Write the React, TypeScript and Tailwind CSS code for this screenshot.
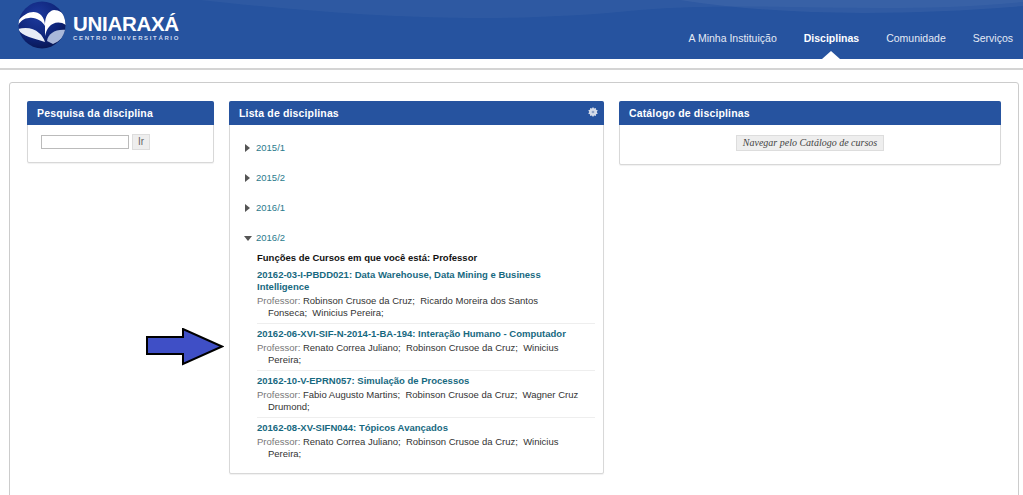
import React from "react";

const navItems = [
  { label: "A Minha Instituição", active: false },
  { label: "Disciplinas", active: true },
  { label: "Comunidade", active: false },
  { label: "Serviços", active: false },
];

const courses = [
  {
    title: "20162-03-I-PBDD021: Data Warehouse, Data Mining e Business Intelligence",
    first: "Robinson Crusoe da Cruz;  Ricardo Moreira dos Santos",
    rest: "Fonseca;  Winicius Pereira;",
  },
  {
    title: "20162-06-XVI-SIF-N-2014-1-BA-194: Interação Humano - Computador",
    first: "Renato Correa Juliano;  Robinson Crusoe da Cruz;  Winicius",
    rest: "Pereira;",
  },
  {
    title: "20162-10-V-EPRN057: Simulação de Processos",
    first: "Fabio Augusto Martins;  Robinson Crusoe da Cruz;  Wagner Cruz",
    rest: "Drumond;",
  },
  {
    title: "20162-08-XV-SIFN044: Tópicos Avançados",
    first: "Renato Correa Juliano;  Robinson Crusoe da Cruz;  Winicius",
    rest: "Pereira;",
  },
];

function Globe() {
  return (
    <svg width="48" height="48" viewBox="0 0 48 48" className="shrink-0">
      <defs>
        <radialGradient id="ball" cx="40%" cy="30%" r="75%">
          <stop offset="0%" stopColor="#1d3a9e" />
          <stop offset="65%" stopColor="#0e2478" />
          <stop offset="100%" stopColor="#081650" />
        </radialGradient>
        <clipPath id="ballClip">
          <circle cx="24" cy="24" r="23.500" />
        </clipPath>
      </defs>
      <circle cx="24" cy="24" r="23.500" fill="url(#ball)" />
      <g clipPath="url(#ballClip)">
        <path d="M0 20C7 11 17 8 23 14c3 3 4 7 4 11-3-5-9-9-16-8-5 0-8 3-11 7z" fill="#ffffff" />
        <path d="M0 28c8-2 16-1 21 4 3 2 5 6 6 9-5-2-11-3-16-5-5-2-9-4-11-8z" fill="#e8edf6" />
        <path d="M27 23c0-7 3-13 9-14 5 0 10 3 12 9v6c-6-4-13-3-17 2-2 2-3 5-4 9z" fill="#ffffff" />
        <path d="M29 40c1-7 8-12 19-11-1 6-6 11-13 14z" fill="#a9b8da" />
      </g>
    </svg>
  );
}

function Arrow() {
  return (
    <svg width="78" height="38" viewBox="0 0 78 38">
      <path d="M1 9H37V1L76 18.500 37 36V26H1z" fill="#3f4fc6" stroke="#000000" strokeWidth="2" strokeLinejoin="miter" />
    </svg>
  );
}

function Panel({ title, icon, className, children }: { title: string; icon?: boolean; className: string; children: React.ReactNode }) {
  return (
    <section className={`shrink-0 border border-[#d8d8d8] rounded-[2px] bg-white shadow-[0_1px_1px_rgba(0,0,0,0.06)] ${className}`}>
      <div className="h-6 -mx-px -mt-px pt-px bg-[#26539f] rounded-t-[2px] flex items-center justify-between px-[10px]">
        <h2 className="text-[10.500px] font-bold text-white tracking-[0.15px]">{title}</h2>
        {icon && (
          <svg width="10" height="10" viewBox="0 0 11 11" className="-mr-[4px] -mt-[4px]">
            <path d="M5.500 0l1.200 1.600L8.600 1l.2 2 1.900.6-1 1.900 1 1.900-1.900.6-.2 2-1.900-.6L5.500 11 4.300 9.400 2.400 10l-.2-2-1.900-.6 1-1.900-1-1.900 1.900-.6.2-2 1.900.6z" fill="#d5dce9" />
            <circle cx="5.500" cy="5.500" r="1.500" fill="#8fa3c6" />
          </svg>
        )}
      </div>
      {children}
    </section>
  );
}

function YearRow({ year, open }: { year: string; open?: boolean }) {
  return (
    <div className="h-[30px] flex items-center">
      {open ? (
        <span className="w-0 h-0 ml-[14px] mr-[4px] border-x-[4px] border-x-transparent border-t-[5px] border-t-[#555555]" />
      ) : (
        <span className="w-0 h-0 ml-[15px] mr-[6px] border-y-[4px] border-y-transparent border-l-[5px] border-l-[#555555]" />
      )}
      <span className="text-[#2b7a8c] text-[9.500px]">{year}</span>
    </div>
  );
}

function Course({ title, first, rest, last }: { title: string; first: string; rest: string; last?: boolean }) {
  return (
    <div className={`pt-1 pb-1 ${last ? "" : "border-b border-[#eeeeee]"}`}>
      <div className="pr-[28px] text-[#17697f] font-bold leading-3 text-[9.500px]">{title}</div>
      <div className="mt-[2px] leading-3 text-[9.500px] whitespace-pre text-[#333333]">
        <span className="text-[#777777]">Professor: </span>
        {first}
        <div className="pl-[11px]">{rest}</div>
      </div>
    </div>
  );
}

export default function App() {
  return (
    <div className="h-[495px] overflow-hidden bg-white font-['Liberation_Sans',Arial,sans-serif]">
      <header className="relative h-[59px] bg-[#26539f] flex items-start justify-between overflow-hidden">
        <svg className="absolute inset-0" width="1023" height="59" viewBox="0 0 1023 59" fill="none">
          <path d="M200 0C400 22 520 22 640 10 760 0 880 16 1023 2V0z" fill="#ffffff" fillOpacity="0.04" />
          <path d="M680 0C780 16 900 16 1023 6V0z" fill="#ffffff" fillOpacity="0.05" />
        </svg>
        <div className="relative flex items-start pl-[18px] pt-[1px]">
          <Globe />
          <div className="ml-[7px] mt-[13px]">
            <div className="text-white font-bold text-[20.500px] leading-[20px] tracking-[-0.3px]">UNIARAXÁ</div>
            <div className="mt-[1px] text-[#cfdaee] font-bold text-[6px] leading-[7px] tracking-[1.650px] whitespace-nowrap">CENTRO UNIVERSITÁRIO</div>
          </div>
        </div>
        <nav className="relative flex h-full pr-[10px]">
          {navItems.map((item) => (
            <div key={item.label} className="relative ml-[27px] pt-[32px]">
              <span className={`text-[10.500px] leading-[13px] block ${item.active ? "text-white font-bold" : "text-[#e4eaf5]"}`}>{item.label}</span>
              {item.active && (
                <span className="absolute bottom-0 left-1/2 -translate-x-1/2 w-0 h-0 border-x-[9px] border-x-transparent border-b-[8px] border-b-white" />
              )}
            </div>
          ))}
        </nav>
      </header>

      <div className="mt-[9px] border-t-2 border-[#d4d4d4] pt-[12px] pl-[9px] pr-[4px]">
        <main className="h-[440px] border border-[#cccccc] rounded-[3px] px-[17px] pt-[18px] flex items-start gap-[15px]">
          <Panel title="Pesquisa da disciplina" className="w-[187px] h-[62px]">
            <div className="flex items-start pl-[13px] pt-[9px]">
              <input className="w-[88px] h-[14px] mt-[1px] border border-[#bbbbbb] bg-white" />
              <button className="ml-[3px] w-[18px] h-[16px] bg-[#eeeeee] border border-[#dddddd] text-[10px] text-[#666666] leading-none">Ir</button>
            </div>
          </Panel>

          <div className="relative shrink-0">
            <div className="absolute -left-[83px] top-[227px]">
              <Arrow />
            </div>
            <Panel title="Lista de disciplinas" icon className="w-[375px] h-[373px]">
              <div className="pt-2">
                <YearRow year="2015/1" />
                <YearRow year="2015/2" />
                <YearRow year="2016/1" />
                <YearRow year="2016/2" open />
                <div className="ml-[27px] mr-[8px]">
                  <div className="-mt-px text-[9.500px] leading-3 font-bold text-[#111111]">Funções de Cursos em que você está: Professor</div>
                  <div className="mt-px">
                    {courses.map((course, i) => (
                      <Course key={course.title} {...course} last={i === courses.length - 1} />
                    ))}
                  </div>
                </div>
              </div>
            </Panel>
          </div>

          <Panel title="Catálogo de disciplinas" className="w-[382px] h-[64px]">
            <div className="flex justify-center pt-[10px]">
              <button className="h-[16px] px-[6px] bg-[#eeeeee] border border-[#dddddd] text-[#444444] italic text-[10px] leading-none font-['Liberation_Serif',serif]">
                Navegar pelo Catálogo de cursos
              </button>
            </div>
          </Panel>
        </main>
      </div>
    </div>
  );
}
